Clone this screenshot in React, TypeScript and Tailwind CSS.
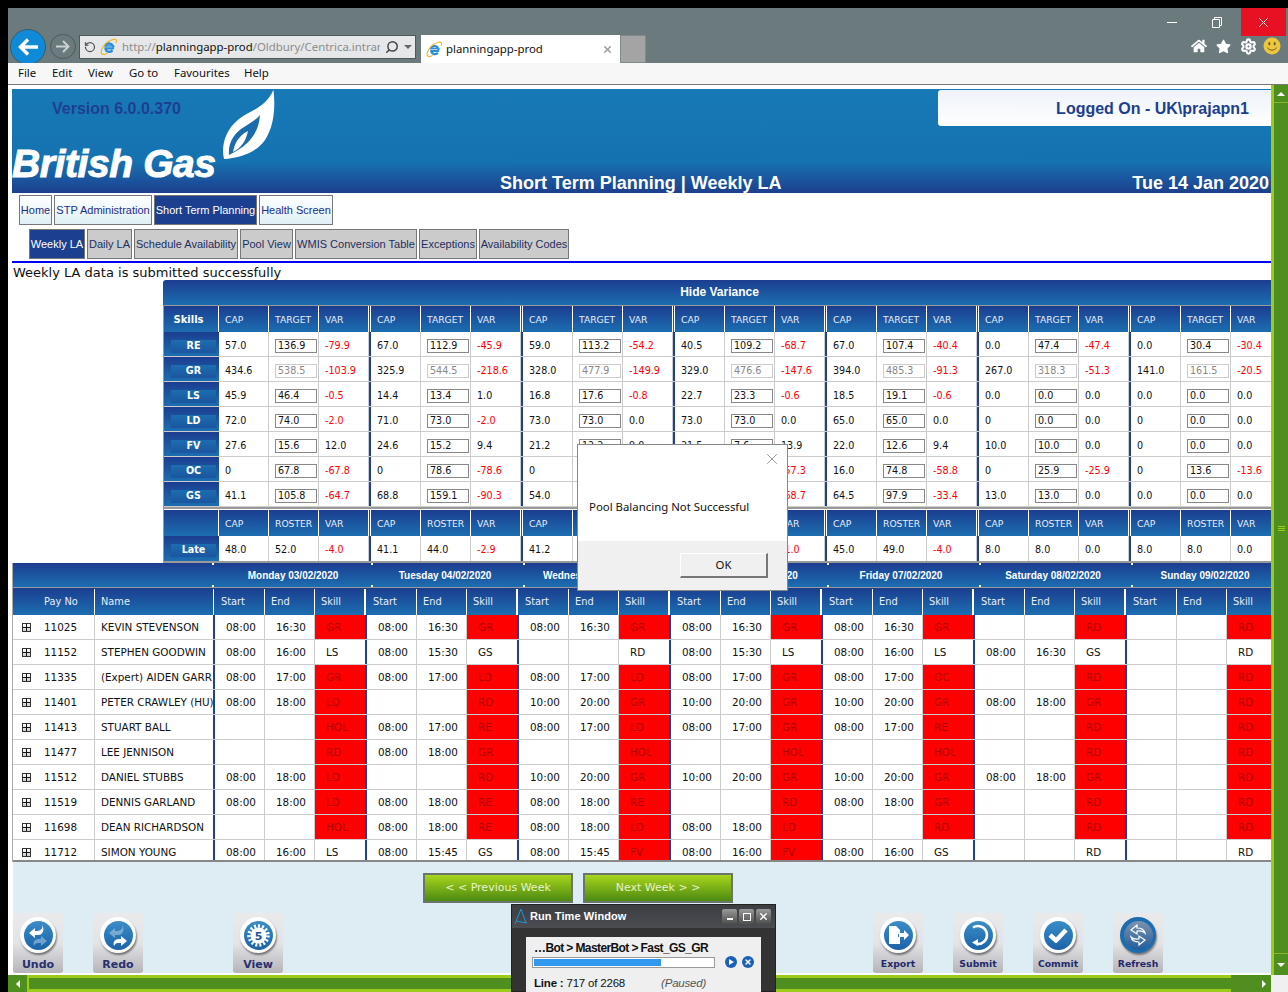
import type { ReactNode } from 'react'
import { RotateCw, Search, Settings, X } from 'lucide-react'
import { FaHome, FaStar } from 'react-icons/fa'

const deja = "font-['DejaVu_Sans',sans-serif]"
const arial = "font-['Liberation_Sans',sans-serif]"
const ui = "font-['Noto_Sans',sans-serif]"
const blueGrad = 'bg-gradient-to-b from-[#1b3d90] to-[#1c6eb1]'

const tabs = [
  { label: 'Home', w: 'w-[33px]' },
  { label: 'STP Administration', w: 'w-[98px]' },
  { label: 'Short Term Planning', w: 'w-[103px]', active: true },
  { label: 'Health Screen', w: 'w-[74px]' },
]

const subTabs = [
  { label: 'Weekly LA', w: 'w-[56px]', active: true },
  { label: 'Daily LA', w: 'w-[45px]' },
  { label: 'Schedule Availability', w: 'w-[104px]' },
  { label: 'Pool View', w: 'w-[53px]' },
  { label: 'WMIS Conversion Table', w: 'w-[122px]' },
  { label: 'Exceptions', w: 'w-[58px]' },
  { label: 'Availability Codes', w: 'w-[90px]' },
]

const skills: { name: string; off?: boolean; groups: [string, string, string][] }[] = [
  { name: 'RE', groups: [['57.0', '136.9', '-79.9'], ['67.0', '112.9', '-45.9'], ['59.0', '113.2', '-54.2'], ['40.5', '109.2', '-68.7'], ['67.0', '107.4', '-40.4'], ['0.0', '47.4', '-47.4'], ['0.0', '30.4', '-30.4']] },
  { name: 'GR', off: true, groups: [['434.6', '538.5', '-103.9'], ['325.9', '544.5', '-218.6'], ['328.0', '477.9', '-149.9'], ['329.0', '476.6', '-147.6'], ['394.0', '485.3', '-91.3'], ['267.0', '318.3', '-51.3'], ['141.0', '161.5', '-20.5']] },
  { name: 'LS', groups: [['45.9', '46.4', '-0.5'], ['14.4', '13.4', '1.0'], ['16.8', '17.6', '-0.8'], ['22.7', '23.3', '-0.6'], ['18.5', '19.1', '-0.6'], ['0.0', '0.0', '0.0'], ['0.0', '0.0', '0.0']] },
  { name: 'LD', groups: [['72.0', '74.0', '-2.0'], ['71.0', '73.0', '-2.0'], ['73.0', '73.0', '0.0'], ['73.0', '73.0', '0.0'], ['65.0', '65.0', '0.0'], ['0', '0.0', '0.0'], ['0', '0.0', '0.0']] },
  { name: 'FV', groups: [['27.6', '15.6', '12.0'], ['24.6', '15.2', '9.4'], ['21.2', '12.2', '9.0'], ['21.5', '7.6', '13.9'], ['22.0', '12.6', '9.4'], ['10.0', '10.0', '0.0'], ['0', '0.0', '0.0']] },
  { name: 'OC', groups: [['0', '67.8', '-67.8'], ['0', '78.6', '-78.6'], ['0', '78.4', '-78.4'], ['0', '57.3', '-57.3'], ['16.0', '74.8', '-58.8'], ['0', '25.9', '-25.9'], ['0', '13.6', '-13.6']] },
  { name: 'GS', groups: [['41.1', '105.8', '-64.7'], ['68.8', '159.1', '-90.3'], ['54.0', '112.4', '-58.4'], ['44.5', '113.2', '-68.7'], ['64.5', '97.9', '-33.4'], ['13.0', '13.0', '0.0'], ['0.0', '0.0', '0.0']] },
]

const late: [string, string, string][] = [['48.0', '52.0', '-4.0'], ['41.1', '44.0', '-2.9'], ['41.2', '45.0', '-3.8'], ['43.0', '44.0', '-1.0'], ['45.0', '49.0', '-4.0'], ['8.0', '8.0', '0.0'], ['8.0', '8.0', '0.0']]

const days = ['Monday 03/02/2020', 'Tuesday 04/02/2020', 'Wednesday 05/02/2020', 'Thursday 06/02/2020', 'Friday 07/02/2020', 'Saturday 08/02/2020', 'Sunday 09/02/2020']

// start, end, skill; a leading ! on the skill paints the cell red
type Shift = [string, string, string]
const rd: Shift = ['', '', '!RD']
const staff: { no: string; name: string; shifts: Shift[] }[] = [
  { no: '11025', name: 'KEVIN STEVENSON', shifts: [['08:00', '16:30', '!GR'], ['08:00', '16:30', '!GR'], ['08:00', '16:30', '!GR'], ['08:00', '16:30', '!GR'], ['08:00', '16:30', '!GR'], rd, rd] },
  { no: '11152', name: 'STEPHEN GOODWIN', shifts: [['08:00', '16:00', 'LS'], ['08:00', '15:30', 'GS'], ['', '', 'RD'], ['08:00', '15:30', 'LS'], ['08:00', '16:00', 'LS'], ['08:00', '16:30', 'GS'], ['', '', 'RD']] },
  { no: '11335', name: '(Expert) AIDEN GARR', shifts: [['08:00', '17:00', '!GR'], ['08:00', '17:00', '!LD'], ['08:00', '17:00', '!LD'], ['08:00', '17:00', '!GR'], ['08:00', '17:00', '!OC'], rd, rd] },
  { no: '11401', name: 'PETER CRAWLEY (HU)', shifts: [['08:00', '18:00', '!LD'], rd, ['10:00', '20:00', '!GR'], ['10:00', '20:00', '!GR'], ['10:00', '20:00', '!GR'], ['08:00', '18:00', '!GR'], rd] },
  { no: '11413', name: 'STUART BALL', shifts: [['', '', '!HOL'], ['08:00', '17:00', '!RE'], ['08:00', '17:00', '!LD'], ['08:00', '17:00', '!GR'], ['08:00', '17:00', '!RE'], rd, rd] },
  { no: '11477', name: 'LEE JENNISON', shifts: [rd, ['08:00', '18:00', '!GR'], ['', '', '!HOL'], ['', '', '!HOL'], ['', '', '!HOL'], rd, rd] },
  { no: '11512', name: 'DANIEL STUBBS', shifts: [['08:00', '18:00', '!LD'], rd, ['10:00', '20:00', '!GR'], ['10:00', '20:00', '!GR'], ['10:00', '20:00', '!GR'], ['08:00', '18:00', '!GR'], rd] },
  { no: '11519', name: 'DENNIS GARLAND', shifts: [['08:00', '18:00', '!LD'], ['08:00', '18:00', '!RE'], ['08:00', '18:00', '!RE'], rd, ['08:00', '18:00', '!GR'], rd, rd] },
  { no: '11698', name: 'DEAN RICHARDSON', shifts: [['', '', '!HOL'], ['08:00', '18:00', '!RE'], ['08:00', '18:00', '!LD'], ['08:00', '18:00', '!LD'], rd, rd, rd] },
  { no: '11712', name: 'SIMON YOUNG', shifts: [['08:00', '16:00', 'LS'], ['08:00', '15:45', 'GS'], ['08:00', '15:45', '!FV'], ['08:00', '16:00', '!FV'], ['08:00', '16:00', 'GS'], ['', '', 'RD'], ['', '', 'RD']] },
]

function IeLogo({ size = 20 }: { size?: number }) {
  return (
    <svg width={size} height={size} viewBox="0 0 20 20" fill="none">
      <path d="M15.5 11.5H6.2c0 4 4.6 5 7.8 2.4" stroke="#2a8fd8" strokeWidth="2.6" />
      <path d="M5.6 9.5c.6-4 6.6-4.6 8.4-1.2l1.4 2.2" stroke="#2a8fd8" strokeWidth="2.6" />
      <path d="M6 8.8h8" stroke="#2a8fd8" strokeWidth="1.6" />
      <path d="M2 17.5C-.5 15 5 3.5 15 1.5c3-.6 4.4 1 2.6 4M2 17.5c1.2 1.4 4 .6 6-.6" stroke="#f0b429" strokeWidth="1.3" />
    </svg>
  )
}

function Smiley() {
  return (
    <svg width="18" height="18" viewBox="0 0 18 18">
      <circle cx="9" cy="9" r="8.5" fill="#ecc63e" />
      <ellipse cx="6.3" cy="6.8" rx="1" ry="1.7" fill="#6a5a20" />
      <ellipse cx="11.7" cy="6.8" rx="1" ry="1.7" fill="#6a5a20" />
      <path d="M4.5 10.5c1.5 3.5 7.5 3.500 9 0" stroke="#6a5a20" strokeWidth="1" fill="none" />
    </svg>
  )
}

function BrowserChrome() {
  return (
    <div className="flex h-[55px] justify-between overflow-hidden bg-[#6b7a7d]">
      <div className="flex items-start pl-[2px] pt-[21px]">
        <div className="flex h-9 w-9 items-center justify-center rounded-full border border-[#3d5a66] bg-[#0f8ad6]">
          <svg width="22" height="20" viewBox="0 0 22 20" fill="none" stroke="white" strokeWidth="3.4">
            <path d="M21 10H4M11 2.5 3.5 10l7.5 7.5" />
          </svg>
        </div>
        <div className="ml-1 mt-[5px] flex h-[25px] w-[26px] items-center justify-center rounded-full border border-[#4c5a5d]">
          <svg width="14" height="13" viewBox="0 0 14 13" fill="none" stroke="#c9d0d2" strokeWidth="2">
            <path d="M0 6.5h12M7 1l5.5 5.5L7 12" />
          </svg>
        </div>
        <div className={`ml-[3px] mt-[6px] flex h-6 w-[337px] items-center border border-[#4c5a5d] bg-[#e6e7e8] pl-[4px] text-[11.4px] ${ui}`}>
          <RotateCw size={12} strokeWidth={2.5} className="-scale-x-100 text-[#555]" />
          <span className="ml-[4px]"><IeLogo size={18} /></span>
          <span className="ml-[4px] w-[258px] overflow-hidden whitespace-nowrap text-[#8c8c8c]">
            http://<span className="text-[#111]">planningapp-prod</span>/Oldbury/Centrica.intranet
          </span>
          <Search size={14} strokeWidth={2.5} className="ml-[5px] -scale-x-100 text-[#444]" />
          <span className="ml-[5px] h-0 w-0 border-x-[4px] border-t-[4px] border-x-transparent border-t-[#666]" />
        </div>
        <div className={`ml-[5px] mt-[6px] flex h-[28px] w-[199px] items-center bg-white pl-[5px] pr-[7px] text-[11.4px] text-[#111] ${ui}`}>
          <IeLogo size={17} />
          <span className="ml-[3px] flex-1">planningapp-prod</span>
          <X size={11} strokeWidth={3} className="text-[#999]" />
        </div>
        <div className="mt-[6px] h-[28px] w-[26px] border border-[#80898b] bg-[#a4a4a4]" />
      </div>
      <div className="mr-[2px] flex flex-col items-end">
        <div className="flex h-[28px] text-white">
          <div className="flex w-[45px] items-center justify-center pr-[3px]"><span className="h-px w-[10px] bg-white" /></div>
          <div className="flex w-[45px] items-center justify-center pr-[3px]">
            <svg width="10" height="11" viewBox="0 0 10 11" fill="none" stroke="white"><path d="M.5 2.5h7v8h-7zM2.5 2.5v-2h7v8h-2" /></svg>
          </div>
          <div className="flex w-[45px] items-center justify-center bg-[#e81123]"><X size={17} strokeWidth={1.3} /></div>
        </div>
        <div className="mr-[2px] mt-[1px] flex items-center text-white">
          <span className="flex w-[24px] justify-center"><FaHome size={16} /></span>
          <span className="flex w-[25px] justify-center"><FaStar size={15} /></span>
          <span className="flex w-[24px] justify-center"><Settings size={17} strokeWidth={3} /></span>
          <span className="flex w-[24px] justify-center"><Smiley /></span>
        </div>
      </div>
    </div>
  )
}

function MenuBar() {
  const items = [['File', 'w-[34px]'], ['Edit', 'w-[36px]'], ['View', 'w-[41px]'], ['Go to', 'w-[45px]'], ['Favourites', 'w-[70px]'], ['Help', 'w-[30px]']]
  return (
    <div className={`flex h-[22px] items-center border-b border-[#777] bg-[#f7f7f7] pb-px pl-[10px] text-[11.4px] text-[#111] ${ui}`}>
      {items.map(([label, w]) => (
        <span key={label} className={w}>{label}</span>
      ))}
    </div>
  )
}

function Flame() {
  return (
    <svg width="70" height="82" viewBox="0 0 70 82" className="-mt-[3px] shrink-0">
      <path d="M58.5 4C60.5 22 59 40 50 54 41 67 24 72 9 73 6 60 10 44 24 33 36 24 50 22 58.5 4Z" fill="white" />
      <path d="M45 29C44 44 37 58 14 69 13 58 18 49 26 43 33 38 40 35 45 29Z" fill="#1a6cab" />
      <path d="M33 45C27 48 20 54 18 66 26 62 31 55 33 45Z" fill="white" />
    </svg>
  )
}

function Header() {
  return (
    <div className={`flex h-[104px] bg-gradient-to-b from-[#1879b7] via-[#1572b0] via-70% to-[#1c3f8e] ${arial} font-bold`}>
      <div className="flex w-[203px] shrink-0 flex-col justify-between pb-[10px]">
        <div className="pl-10 pt-[11px] text-[16px] leading-[18px] text-[#1e3f90]">Version 6.0.0.370</div>
        <div className="whitespace-nowrap text-[39px] italic leading-[39px] tracking-[-0.4px] text-white [-webkit-text-stroke:1px_white]">British Gas</div>
      </div>
      <Flame />
      <div className="ml-[215px] self-end text-[18px] leading-[19px] text-white">Short Term Planning | Weekly LA</div>
      <div className="ml-auto flex flex-col justify-between">
        <div className="ml-auto mt-px flex h-9 w-[333px] items-center justify-end rounded-l-[3px] bg-gradient-to-b from-[#eef2f9] to-white pr-[22px] pt-px text-[16px] text-[#1c3f8f]">
          Logged On - UK\prajapn1
        </div>
        <div className="self-end pr-[2px] text-[18px] leading-[19px] text-white">Tue 14 Jan 2020</div>
      </div>
    </div>
  )
}

function Nav() {
  return (
    <div className={`text-[11px] leading-none ${arial}`}>
      <div className="ml-[7px] mt-[2px] flex h-[30px] gap-[2px]">
        {tabs.map((t) => (
          <div
            key={t.label}
            className={`flex items-center justify-center whitespace-nowrap border pt-px ${t.w} ${
              t.active
                ? 'border-[#777] bg-[#1c3f8f] text-white'
                : 'border-[#777] bg-gradient-to-b from-white to-[#dff0f6] text-[#1c2f88]'
            }`}
          >
            {t.label}
          </div>
        ))}
      </div>
      <div className="ml-[17px] mt-1 flex h-[30px] gap-[2px]">
        {subTabs.map((t) => (
          <div
            key={t.label}
            className={`flex items-center justify-center whitespace-nowrap border border-[#777] pt-px ${t.w} ${
              t.active ? 'bg-[#1c3f8f] text-white' : 'bg-[#cbcbcb] text-[#1c2f60]'
            }`}
          >
            {t.label}
          </div>
        ))}
      </div>
      <div className="mt-[2px] h-[2px] bg-[#0000f0]" />
    </div>
  )
}

function ValueCell({ value, red, pt = 'pt-[4px]' }: { value: string; red?: boolean; pt?: string }) {
  return (
    <div className={`flex w-[50px] items-center border-r border-[#ccc] pl-[6px] ${pt} ${red ? 'text-[#f00]' : ''}`}>
      {value}
    </div>
  )
}

function HeadCells({ mid }: { mid: string }) {
  return (
    <>
      {Array.from({ length: 7 }, (_, i) => (
        <div key={i} className="flex w-[152px] shrink-0">
          {['CAP', mid, 'VAR'].map((label) => (
            <div key={label} className="flex w-[50px] items-center border-r border-white pl-[6px] pt-px text-[9.2px]">{label}</div>
          ))}
          <div className="w-[2px] border-r border-white" />
        </div>
      ))}
    </>
  )
}

function SkillLabel({ name, pt = 'pt-[4px]' }: { name: string; pt?: string }) {
  return (
    <div className={`flex w-[55px] shrink-0 items-center pl-[7px] ${pt} ${blueGrad}`}>
      <div className="flex h-[13px] w-[45px] items-center justify-center bg-gradient-to-b from-[#1c6eb1] to-[#1b559f] font-bold text-white">{name}</div>
    </div>
  )
}

function SkillsTable() {
  return (
    <div className={`ml-[151px] w-[1108px] overflow-hidden border-b-2 border-[#999] text-[9.6px] text-[#111] ${deja}`}>
      <div className={`flex h-[25px] items-center justify-center rounded-tl-[3px] pb-px pl-[5px] text-[12px] font-bold text-white ${blueGrad} ${arial}`}>Hide Variance</div>
      <div className="border-l border-t border-[#999]">
        <div className={`flex h-[26px] text-[#e8eef6] ${blueGrad}`}>
          <div className="flex w-[55px] shrink-0 items-center justify-center border-r border-white pr-[5px] pt-px text-[10px] font-bold text-white">Skills</div>
          <HeadCells mid="TARGET" />
        </div>
        {skills.map((row) => (
          <div key={row.name} className="flex h-[25px] border-b border-[#ccc]">
            <SkillLabel name={row.name} />
            {row.groups.map(([cap, target, variance], i) => (
              <div key={i} className="flex w-[152px] shrink-0">
                <ValueCell value={cap} />
                <div className="flex w-[50px] items-center border-r border-[#ccc] pl-[6px] pt-[4px]">
                  <input
                    readOnly
                    disabled={row.off}
                    value={target}
                    className={`h-[14px] w-[42px] border pl-[2px] outline-none ${row.off ? 'border-[#ccc] bg-white text-[#888]' : 'border-[#888] text-[#111]'}`}
                  />
                </div>
                <ValueCell value={variance} red={variance.startsWith('-')} />
                <div className="w-[2px] bg-[#1e409a]" />
              </div>
            ))}
          </div>
        ))}
        <div className="h-[3px] border-t-2 border-[#999]" />
        <div className={`flex h-[26px] text-[#e8eef6] ${blueGrad}`}>
          <div className="w-[55px] shrink-0 border-r border-white" />
          <HeadCells mid="ROSTER" />
        </div>
        <div className="flex h-[25px]">
          <SkillLabel name="Late" pt="pt-[3px]" />
          {late.map(([cap, roster, variance], i) => (
            <div key={i} className="flex w-[152px] shrink-0">
              <ValueCell value={cap} pt="pt-[3px]" />
              <ValueCell value={roster} pt="pt-[3px]" />
              <ValueCell value={variance} red={variance.startsWith('-')} pt="pt-[3px]" />
              <div className="w-[2px] bg-[#1e409a]" />
            </div>
          ))}
        </div>
      </div>
    </div>
  )
}

function ExpandBox() {
  return (
    <div className="flex h-[9px] w-[9px] items-center justify-center border border-[#333] bg-gradient-to-b from-white to-[#ccc]">
      <svg width="7" height="7" viewBox="0 0 7 7" stroke="#111"><path d="M0 3.5h7M3.5 0v7" /></svg>
    </div>
  )
}

function ScheduleTable() {
  return (
    <div className={`overflow-hidden border-l border-[#aaa] text-[10.4px] text-[#111] ${deja}`}>
      <div className={`flex h-[25px] border-b border-[#999] text-white ${blueGrad}`}>
        <div className="w-[201px] shrink-0" />
        {days.map((day, i) => (
          <div key={day} className={`relative flex w-[152px] shrink-0 items-center justify-center pl-[6px] text-[10px] font-bold ${arial}`}>
            {day}
            {/* little white resize ticks at the column joins */}
            <span className={`absolute top-0 h-[2px] w-[2px] bg-white ${i === 0 ? '-left-[2px]' : 'left-[5px]'}`} />
            <span className={`absolute bottom-0 h-[2px] w-[2px] bg-white ${i === 0 ? '-left-[2px]' : 'left-[5px]'}`} />
          </div>
        ))}
      </div>
      <div className={`flex h-[27px] pt-px text-[9.8px] text-[#e8eef6] ${blueGrad}`}>
        <div className="flex w-[82px] shrink-0 items-center border-r border-white pl-[31px]">Pay No</div>
        <div className="flex w-[119px] shrink-0 items-center border-r border-white pl-[6px]">Name</div>
        {days.map((day) => (
          <div key={day} className="flex w-[152px] shrink-0 pl-px">
            {['Start', 'End', 'Skill'].map((label) => (
              <div key={label} className="flex w-[50px] items-center border-r border-white pl-[6px]">{label}</div>
            ))}
            <div className="w-px border-r border-white" />
          </div>
        ))}
      </div>
      <div className="h-[247px] overflow-hidden border-b-2 border-[#888]">
        {staff.map((person) => (
          <div key={person.no} className="flex h-[25px] border-b border-[#ccc]">
            <div className="flex w-[82px] shrink-0 items-center border-r border-[#ccc] pt-px">
              <div className="flex w-[26px] justify-center"><ExpandBox /></div>
              <span className="pl-[5px]">{person.no}</span>
            </div>
            <div className="flex w-[118px] shrink-0 items-center overflow-hidden whitespace-nowrap pl-[6px] pt-px">{person.name}</div>
            {person.shifts.map(([start, end, skill], i) => {
              const red = skill.startsWith('!')
              return (
                <div key={i} className="flex w-[152px] shrink-0">
                  <div className="w-[2px] bg-[#1e409a]" />
                  <div className="flex w-[50px] items-center border-r border-[#ccc] pl-[11px] pt-px">{start}</div>
                  <div className="flex w-[50px] items-center border-r border-[#ccc] pl-[11px] pt-px">{end}</div>
                  <div className={`flex w-[50px] items-center pl-[11px] pt-px ${red ? 'bg-[#f00] text-[#a80000]' : ''}`}>{skill.replace('!', '')}</div>
                </div>
              )
            })}
          </div>
        ))}
      </div>
    </div>
  )
}

function WeekButton({ children }: { children: ReactNode }) {
  return (
    <div className={`flex h-[30px] w-[150px] items-center justify-center border-2 border-[#6c756c] bg-gradient-to-b from-[#a8d61c] to-[#4c8a12] text-[11px] text-[#e6f2cc] ${deja}`}>
      {children}
    </div>
  )
}

function ToolButton({ label, ml, ring, small, children }: { label: string; ml: string; ring?: boolean; small?: boolean; children: ReactNode }) {
  return (
    <div className={`flex h-[60px] w-[50px] shrink-0 flex-col items-center rounded-b-[3px] bg-gradient-to-b from-[#eaeaec] via-[#e4e4e6] to-[#b4b4ba] ${ml}`}>
      <div className={`mt-1 flex h-[36px] w-[36px] items-center justify-center rounded-full shadow-[1px_2px_2px_rgba(0,0,0,0.45)] ${ring ? 'bg-[#1c6cb0]' : 'bg-white'}`}>
        <div className={`flex h-[29px] w-[29px] items-center justify-center rounded-full bg-gradient-to-b ${ring ? 'from-[#7d93ad] to-[#1f5c9c]' : 'from-[#3a8ec8] to-[#1c62a8]'}`}>
          {children}
        </div>
      </div>
      <div className={`font-bold leading-[14px] ${deja} ${small ? 'mt-1 text-[9.3px] text-[#1f2a6c]' : 'mt-[5px] text-[11px] text-[#27306e]'}`}>{label}</div>
    </div>
  )
}

function Toolbar() {
  return (
    <div className="mt-[10px] flex">
      <ToolButton label="Undo" ml="">
        <svg width="22" height="24" viewBox="0 0 22 24" fill="white">
          <path d="M15 1c1.5 4-1 7-5 7H8V5L2 10l6 5v-3h3c5 0 7-5 4-11Z" />
          <path opacity=".35" d="M7 23c-1.5-4 1-7 5-7h2v-3l6 5-6 5v-3h-3c-2 0-3 1-4 3Z" />
        </svg>
      </ToolButton>
      <ToolButton label="Redo" ml="ml-[30px]">
        <svg width="22" height="24" viewBox="0 0 22 24" fill="white">
          <path opacity=".35" d="M15 1c1.5 4-1 7-5 7H8V5L2 10l6 5v-3h3c5 0 7-5 4-11Z" />
          <path d="M7 23c-1.5-4 1-7 5-7h2v-3l6 5-6 5v-3h-3c-2 0-3 1-4 3Z" />
        </svg>
      </ToolButton>
      <ToolButton label="View" ml="ml-[90px]">
        <svg width="25" height="25" viewBox="0 0 25 25">
          <circle cx="12.5" cy="12.5" r="9.5" fill="none" stroke="white" strokeWidth="3.5" strokeDasharray="2 2" />
          <circle cx="12.5" cy="12.5" r="8" fill="white" />
          <text x="12.5" y="16.5" textAnchor="middle" fontSize="11" fontWeight="bold" fill="#1c4f9f" fontFamily="DejaVu Sans, sans-serif">5</text>
        </svg>
      </ToolButton>
      <ToolButton label="Export" ml="ml-[590px]" small>
        <svg width="22" height="20" viewBox="0 0 22 20" fill="white">
          <path d="M2 1h7l4 4v4H11v3h2v7H2Z" />
          <path d="M12 8h5V5l5 5-5 5v-3h-5Z" />
        </svg>
      </ToolButton>
      <ToolButton label="Submit" ml="ml-[30px]" small>
        <svg width="24" height="24" viewBox="0 0 24 24" fill="none" stroke="white" strokeWidth="2.6">
          <path d="M7 4.5A9 9 0 1 1 10 20.8" />
          <path d="M12 16v7l-6-3.5Z" fill="white" stroke="none" />
        </svg>
      </ToolButton>
      <ToolButton label="Commit" ml="ml-[30px]" small>
        <svg width="20" height="16" viewBox="0 0 20 16" fill="none" stroke="white" strokeWidth="4.5">
          <path d="M2 8l6 5.5L18 3" />
        </svg>
      </ToolButton>
      <ToolButton label="Refresh" ml="ml-[30px]" ring small>
        <svg width="20" height="24" viewBox="0 0 20 24" fill="none" stroke="white" strokeWidth="1.2">
          <path d="M3 7l6-5v3c4 0 7 1 8 5-2-2-4-2.5-8-2v3Z" />
          <path d="M17 17l-6 5v-3c-4 0-7-1-8-5 2 2 4 2.5 8 2v-3Z" />
        </svg>
      </ToolButton>
    </div>
  )
}

function PageBody() {
  return (
    <div className="h-full w-[1263px] bg-white pl-1 pt-1">
      <Header />
      <Nav />
      <div className={`h-[17px] pl-px pt-px text-[13px] leading-[17px] text-[#111] ${deja}`}>Weekly LA data is submitted successfully</div>
      <SkillsTable />
      <ScheduleTable />
      <div className="ml-px h-[111px] bg-[#deedf4] pt-[11px]">
        <div className="ml-[410px] flex gap-[10px]">
          <WeekButton>{'< < Previous Week'}</WeekButton>
          <WeekButton>{'Next Week > >'}</WeekButton>
        </div>
        <Toolbar />
      </div>
    </div>
  )
}

function ScrollBars() {
  return (
    <div className="flex w-[17px] flex-col border-l-[3px] border-[#9ccb1c] bg-[#4f8f1f]">
      <div className="flex h-[18px] items-center justify-center border-b border-[#8ab52a]">
        <span className="h-0 w-0 border-x-[4px] border-b-[4px] border-x-transparent border-b-white" />
      </div>
      <div className="flex flex-1 flex-col items-center justify-center gap-px">
        <span className="h-px w-[7px] bg-[#9ccb1c]" />
        <span className="h-px w-[7px] bg-[#9ccb1c]" />
        <span className="h-px w-[7px] bg-[#9ccb1c]" />
      </div>
      <div className="flex h-[22px] items-center justify-center border-t border-[#8ab52a]">
        <span className="h-0 w-0 border-x-[4px] border-t-[4px] border-x-transparent border-t-white" />
      </div>
    </div>
  )
}

function BottomBar() {
  return (
    <div className="flex h-[17px]">
      <div className="flex w-[1263px] bg-[#4f8f1f]">
        <div className="flex w-[19px] items-center justify-center">
          <span className="h-0 w-0 border-y-[4px] border-r-[4px] border-y-transparent border-r-white" />
        </div>
        <div className="flex-1 border-y-[3px] border-l-2 border-[#9ccb1c]" />
        <div className="flex w-[40px] items-center justify-end pr-[5px]">
          <span className="h-0 w-0 border-y-[4px] border-l-[4px] border-y-transparent border-l-white" />
        </div>
      </div>
      <div className="flex-1 bg-[#f0f0f0]" />
    </div>
  )
}

function PoolDialog() {
  return (
    <div className={`absolute left-[577px] top-[444px] flex h-[147px] w-[211px] flex-col border border-[#888] bg-white text-[11.4px] text-[#111] ${ui}`}>
      <div className="flex h-[96px] flex-col">
        <div className="flex justify-end pr-[6px] pt-[5px]"><X size={18} strokeWidth={1} className="text-[#777]" /></div>
        <div className="pl-[11px] pt-[30px]">Pool Balancing Not Successful</div>
      </div>
      <div className="flex flex-1 items-start justify-end bg-[#f0f0f0] pr-[19px] pt-[12px]">
        <div className="flex h-[25px] w-[88px] items-center justify-center border-b-2 border-l border-r-2 border-t border-b-[#777] border-l-white border-r-[#777] border-t-white">OK</div>
      </div>
    </div>
  )
}

function RunTimeWindow() {
  const btn = 'flex h-[15px] w-[15px] items-center justify-center rounded-[2px] bg-gradient-to-b from-[#9a9a9a] to-[#4e4e4e]'
  return (
    <div className={`absolute left-[511px] top-[904px] h-[88px] w-[265px] border border-[#222] bg-[#333] ${arial}`}>
      <div className="flex h-[23px] items-center bg-gradient-to-b from-[#3c3e44] to-[#4a4c50] pl-[2px] pr-[4px] text-[11px] font-bold tracking-[0.1px] text-white">
        <svg width="15" height="17" viewBox="0 0 15 17" fill="none" stroke="#1b9ad6">
          <path d="M1 16 7 1l5 14" />
          <path d="M3 13c2 1 6 1 10 2" />
        </svg>
        <span className="ml-px">Run Time Window</span>
        <div className="ml-auto flex gap-[2px]">
          <span className={btn}><span className="mt-[5px] h-[2px] w-[6px] bg-white" /></span>
          <span className={btn}><span className="h-[8px] w-[8px] border border-white" /></span>
          <span className={btn}><X size={11} strokeWidth={3} className="text-white" /></span>
        </div>
      </div>
      <div className="ml-[14px] mt-[9px] h-[60px] w-[235px] bg-[#efefef] pl-[8px] pt-[4px] text-[#111]">
        <div className="whitespace-nowrap text-[12px] font-bold leading-[14px] tracking-[-0.6px]">…Bot &gt; MasterBot &gt; Fast_GS_GR</div>
        <div className="-ml-[2px] mt-px flex items-center">
          <div className="h-[11px] w-[183px] border border-[#999] bg-white p-px">
            <div className="h-full w-[127px] bg-[#3399f0]" />
          </div>
          <span className="ml-[10px] flex h-[12px] w-[12px] items-center justify-center rounded-full bg-[#1c5fb4]">
            <span className="ml-px h-0 w-0 border-y-[3px] border-l-[5px] border-y-transparent border-l-white" />
          </span>
          <span className="ml-[5px] flex h-[12px] w-[12px] items-center justify-center rounded-full bg-[#1c5fb4]">
            <X size={8} strokeWidth={4} className="text-white" />
          </span>
        </div>
        <div className="mt-[8px] flex whitespace-nowrap text-[11.5px] leading-[14px] tracking-[-0.2px]">
          <span className="font-bold">Line :</span>
          <span className="ml-[3px]">717 of 2268</span>
          <span className="ml-[36px] italic text-[#555]">(Paused)</span>
        </div>
      </div>
    </div>
  )
}

export default function App() {
  return (
    <div className="relative h-[992px] w-[1288px] overflow-hidden bg-black pl-2 pt-2">
      <BrowserChrome />
      <MenuBar />
      <div className="flex h-[890px]">
        <PageBody />
        <ScrollBars />
      </div>
      <BottomBar />
      <PoolDialog />
      <RunTimeWindow />
    </div>
  )
}
